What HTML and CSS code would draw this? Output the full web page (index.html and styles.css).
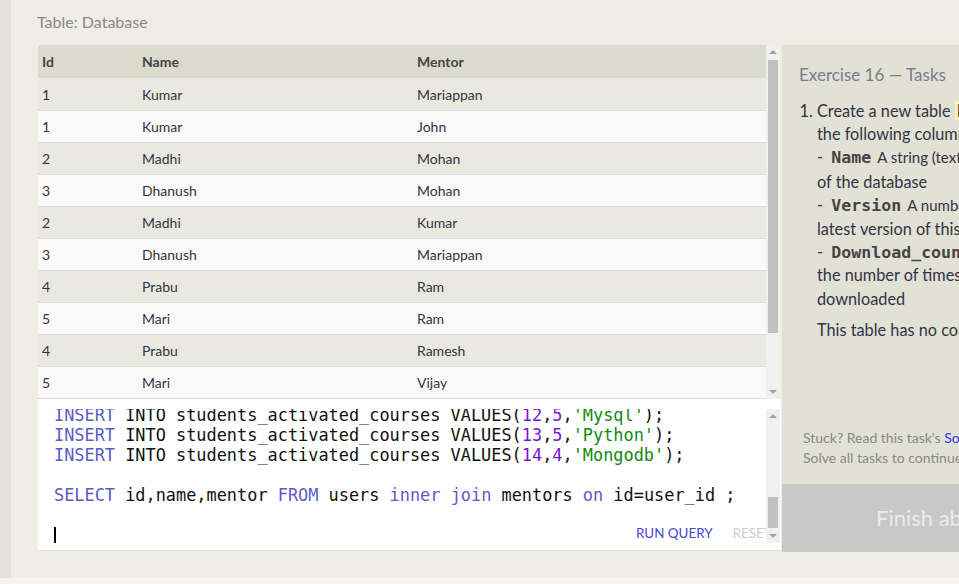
FILE: index.html
```html
<!DOCTYPE html>
<html>
<head>
<meta charset="utf-8">
<link rel="stylesheet" href="styles.css">
</head>
<body>
<div class="page">
  <div class="strip"></div>
  <div class="main">
    <div class="title">Table: Database</div>
    <div class="content">
      <div class="leftcol">
        <div class="tablebox">
          <div class="tablewrap">
            <table class="data">
              <thead>
                <tr><th class="c1">Id</th><th class="c2">Name</th><th>Mentor</th></tr>
              </thead>
              <tbody>
                <tr><td>1</td><td>Kumar</td><td>Mariappan</td></tr>
                <tr><td>1</td><td>Kumar</td><td>John</td></tr>
                <tr><td>2</td><td>Madhi</td><td>Mohan</td></tr>
                <tr><td>3</td><td>Dhanush</td><td>Mohan</td></tr>
                <tr><td>2</td><td>Madhi</td><td>Kumar</td></tr>
                <tr><td>3</td><td>Dhanush</td><td>Mariappan</td></tr>
                <tr><td>4</td><td>Prabu</td><td>Ram</td></tr>
                <tr><td>5</td><td>Mari</td><td>Ram</td></tr>
                <tr><td>4</td><td>Prabu</td><td>Ramesh</td></tr>
                <tr><td>5</td><td>Mari</td><td>Vijay</td></tr>
              </tbody>
            </table>
          </div>
          <div class="sbar tsbar">
            <div class="arr up"></div>
            <div class="track"><div class="thumb tthumb"></div></div>
            <div class="arr down"></div>
          </div>
        </div>
        <div class="editor">
          <div class="codearea">
            <div class="code"><span class="kw">INSERT</span> INTO students_activated_courses VALUES(<span class="num">12</span>,<span class="num">5</span>,<span class="str">'Mysql'</span>);
<span class="kw">INSERT</span> INTO students_activated_courses VALUES(<span class="num">13</span>,<span class="num">5</span>,<span class="str">'Python'</span>);
<span class="kw">INSERT</span> INTO students_activated_courses VALUES(<span class="num">14</span>,<span class="num">4</span>,<span class="str">'Mongodb'</span>);

<span class="kw">SELECT</span> id,name,mentor <span class="kw">FROM</span> users <span class="kw">inner</span> <span class="kw">join</span> mentors <span class="kw">on</span> id=user_id ;

<span class="cursor"></span></div>
          </div>
          <div class="actions"><span class="run">RUN QUERY</span><span class="reset">RESET</span></div>
          <div class="sbar esbar">
            <div class="arr up"></div>
            <div class="track etrack"><div class="thumb ethumb"></div></div>
            <div class="arr down"></div>
          </div>
        </div>
      </div>
      <div class="panel">
        <div class="tasks">
          <div class="ex">Exercise 16 — Tasks</div>
          <ol class="list">
            <li>Create a new table <span class="hl">Database</span> with<br>the following columns:<br>- <b class="mono">Name</b> <span class="small">A string (text) describing the name</span><br>of the database<br>- <b class="mono">Version</b> <span class="small">A number (floating point) of the</span><br>latest version of this database<br>- <b class="mono">Download_count</b> An integer count of<br>the number of times this database was<br>downloaded
              <p class="note">This table has no constraints.</p>
            </li>
          </ol>
        </div>
        <div class="stuck">Stuck? Read this task's <span class="link">Solution</span>.<br>Solve all tasks to continue to the next lesson.</div>
        <div class="finish">Finish above Tasks</div>
      </div>
    </div>
  </div>
</div>
</body>
</html>
```
FILE: styles.css
```css
html, body {
  margin: 0;
  padding: 0;
  width: 959px;
  height: 584px;
  overflow: hidden;
  background: #f5f4ef;
}
.page {
  display: flex;
  height: 578px;
  font-family: "Lato", "Open Sans", sans-serif;
}
.strip {
  width: 11px;
  background: #e5e2de;
  flex: none;
}
.main {
  flex: 1;
  background: #efede6;
  padding: 12px 0 0 27px;
  box-sizing: border-box;
  min-width: 0;
}
.title {
  font-size: 16px;
  line-height: 20px;
  color: #888;
  margin-left: -1px;
  height: 33px;
}
.content {
  display: flex;
  align-items: flex-start;
}
.leftcol {
  width: 743px;
  flex: none;
}
.tablebox {
  display: flex;
  height: 354px;
}
.tablewrap {
  width: 728px;
  overflow: hidden;
}
.data {
  width: 100%;
  border-collapse: collapse;
  font-size: 14px;
  color: #333344;
}
.data th {
  background: #dadbcd;
  text-align: left;
  font-weight: bold;
  color: #444;
  height: 33px;
  padding: 0 4px;
  box-sizing: border-box;
}
.data th.c1 { width: 100px; }
.data th.c2 { width: 275px; }
.data td {
  height: 32px;
  padding: 1px 4px 0;
  box-sizing: border-box;
  border-bottom: 1px solid #dcdcdc;
}
.data tbody tr:nth-child(odd) td { background: #e9e9e1; }
.data tbody tr:nth-child(even) td { background: #f9f9f9; }
.sbar {
  width: 14px;
  background: #f0f0f0;
  display: flex;
  flex-direction: column;
  align-items: center;
}
.arr {
  width: 0;
  height: 0;
  border-left: 4px solid transparent;
  border-right: 4px solid transparent;
  flex: none;
}
.arr.up { border-bottom: 4px solid #a3a3a3; margin: 5px 0 6px; }
.arr.down { border-top: 4px solid #a3a3a3; margin: 6px 0 5px; }
.track {
  flex: 1;
  width: 10px;
}
.tthumb {
  height: 273px;
  background: #c1c1c1;
}
.editor {
  position: relative;
  height: 152px;
  background: #fff;
  border-bottom: 1px solid #e2e2dc;
  box-sizing: border-box;
  display: flex;
  padding: 10px 0 7px 16px;
}
.codearea {
  flex: 1;
  overflow: hidden;
}
.code {
  margin-top: -4px;
  font-family: "DejaVu Sans Mono", monospace;
  font-size: 16.9px;
  line-height: 20px;
  white-space: pre;
  color: #111;
}
.kw { color: #5c5cc4; }
.num { color: #7a14d8; }
.str { color: #108a10; }
.cursor {
  display: inline-block;
  width: 2px;
  height: 19px;
  background: #000;
  vertical-align: -5px;
}
.esbar {
  position: relative;
  z-index: 1;
  height: 134px;
  margin-right: 1px;
}
.esbar .arr.up { margin-top: 5px; }
.etrack {
  display: flex;
  flex-direction: column;
  justify-content: flex-end;
}
.ethumb {
  height: 31px;
  background: #c1c1c1;
}
.actions {
  position: absolute;
  left: 598px;
  bottom: 8px;
  line-height: 18px;
  display: flex;
  gap: 20px;
  white-space: nowrap;
}
.run { color: #4646d2; font-size: 13.4px; }
.reset { color: #cccccc; font-size: 13.4px; }
.panel {
  margin-left: 1px;
  width: 320px;
  flex: none;
  height: 507px;
  background: #e1e1d5;
  display: flex;
  flex-direction: column;
}
.tasks {
  flex: 1;
  padding: 20px 0 0 17px;
}
.ex {
  font-size: 17px;
  line-height: 20px;
  color: #7c7c8c;
  margin-bottom: 14px;
}
.list {
  margin: 0;
  padding: 0 0 0 18px;
  font-size: 16.3px;
  line-height: 23.2px;
  color: #333344;
  white-space: nowrap;
}
.hl {
  background: #f3f0b8;
  padding: 0 2px;
}
.mono {
  font-family: "DejaVu Sans Mono", monospace;
  font-size: 16.6px;
  line-height: 14px;
  color: #444;
  margin-left: 4px;
}
.small { font-size: 15px; margin-left: 2px; }
.note {
  margin: 8px 0 0;
}
.stuck {
  padding: 0 0 16px 21px;
  font-size: 14px;
  line-height: 20px;
  color: #888;
  white-space: nowrap;
}
.link { color: #3333ee; }
.finish {
  height: 68px;
  background: #c8c8c8;
  color: #ececec;
  font-size: 22px;
  line-height: 68px;
  padding-left: 94px;
  white-space: nowrap;
}
```
